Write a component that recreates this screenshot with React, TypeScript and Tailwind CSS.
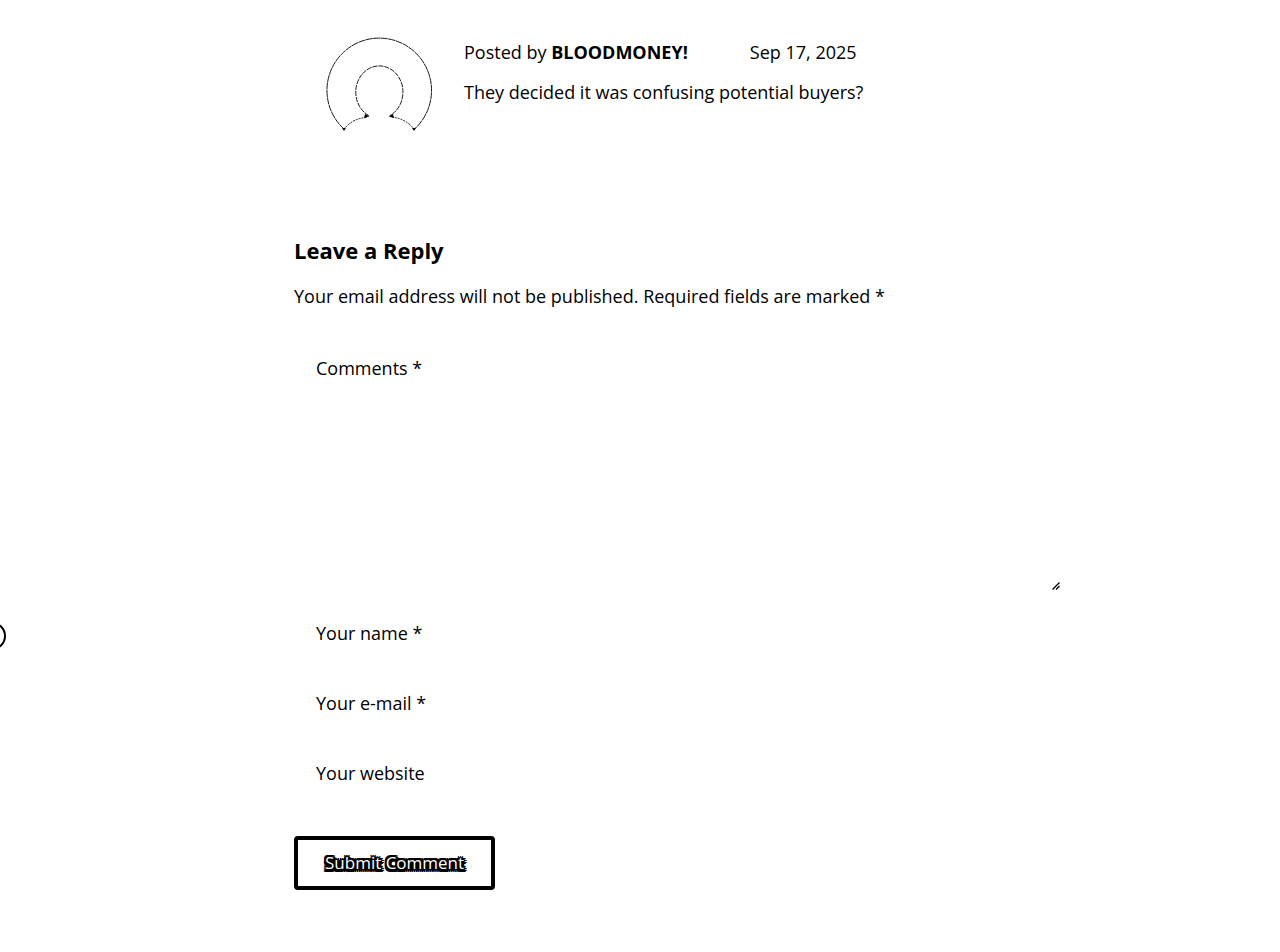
function Avatar() {
  return (
    <svg viewBox="0 0 108 96" className="h-24 w-[108px] shrink-0" fill="none" stroke="#000" strokeWidth="0.9" role="img" aria-label="Avatar">
      <path d="M18.500 93.500 A52.3 52.3 0 1 1 88 93.500" strokeDasharray="7 0.5" />
      <path d="M42.700 79.500 A23.600 26.2 0 1 1 64 79.500" strokeDasharray="5 1" />
      <path d="M18 93 Q27 82 41 81.500" strokeDasharray="2 1" />
      <path d="M88 93 Q79 82 65 81" strokeDasharray="2 1" />
      <path d="M39 78 L43.500 80.300 L38 82Z M67 78 L62.500 80.300 L68 82Z M16 92h4l-2 3z M86 92h4l-2 3z" fill="#000" stroke="none" />
    </svg>
  );
}

const fieldClass =
  "peer col-start-1 row-start-1 block w-full border-0 bg-transparent px-[22px] text-black outline-none";
const labelClass =
  "pointer-events-none col-start-1 row-start-1 px-[22px] peer-not-placeholder-shown:invisible";

function Field({ id, label, type }: { id: string; label: string; type: string }) {
  return (
    <div className="grid items-center">
      <input id={id} type={type} placeholder=" " className={`${fieldClass} h-[54px]`} />
      <label htmlFor={id} className={labelClass}>{label}</label>
    </div>
  );
}

export default function App() {
  return (
    <div className="relative min-h-screen overflow-x-hidden bg-white pr-[216px] pl-[294px] font-['Open_Sans',sans-serif] text-[18px] leading-7 text-black">
      <button aria-label="Open side panel" className="absolute top-[622px] -left-[22px] size-7 rounded-full border-2 border-black" />

      <article className="flex gap-[30px] pt-9 pl-8">
        <Avatar />
        <div className="pt-0.5">
          <header className="flex gap-[62px]">
            <p>Posted by <strong className="font-bold">BLOODMONEY!</strong></p>
            <time dateTime="2025-09-17">Sep 17, 2025</time>
          </header>
          <p className="mt-3">They decided it was confusing potential buyers?</p>
        </div>
      </article>

      <section className="mt-[102px]">
        <h2 className="text-[22px] leading-8 font-bold">Leave a Reply</h2>
        <p className="mt-4">Your email address will not be published. Required fields are marked *</p>
        <form className="mt-8" onSubmit={(e) => e.preventDefault()}>
          <div className="relative grid">
            <textarea id="comment" placeholder=" " className={`${fieldClass} h-[250px] resize-none py-3`} />
            <label htmlFor="comment" className={`${labelClass} pt-3`}>Comments *</label>
            <svg viewBox="0 0 8 8" className="pointer-events-none absolute right-1 bottom-0.5 size-2" fill="none" stroke="#000" strokeWidth="1.3" aria-hidden="true">
              <path d="M0.500 7.500 L7.500 0.500 M4 7.500 L7.500 4" />
            </svg>
          </div>
          <div className="mt-3.5 grid gap-4">
            <Field id="name" label="Your name *" type="text" />
            <Field id="email" label="Your e-mail *" type="email" />
            <Field id="website" label="Your website" type="url" />
          </div>
          <button type="submit" className="mt-9 h-[54px] rounded-[4px] border-4 border-black bg-white px-[27px] text-[17px] text-white [text-shadow:2px_0_#000,-2px_0_#000,0_2px_#000,0_-2px_#000,1px_1px_#000,-1px_1px_#000,1px_-1px_#000,-1px_-1px_#000,2px_2px_#000,-2px_2px_#000,2px_-2px_#000,-2px_-2px_#000,0_3px_#000,2px_3px_#000,-2px_3px_#000,3px_0_#000,3px_2px_#000]">
            Submit Comment
          </button>
        </form>
      </section>
    </div>
  );
}
